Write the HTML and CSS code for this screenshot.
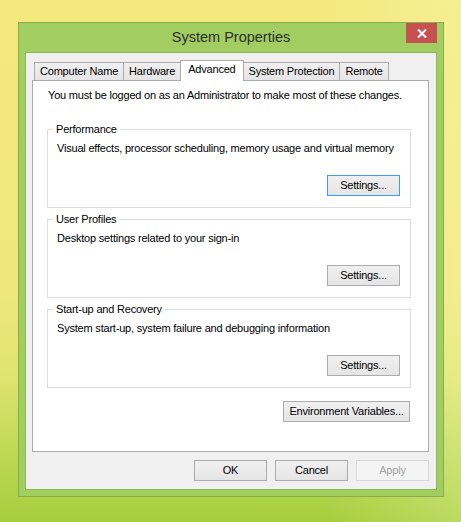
FILE: index.html
```html
<!DOCTYPE html>
<html lang="en">
<head>
<meta charset="utf-8">
<title>System Properties</title>
<link rel="stylesheet" href="styles.css">
</head>
<body>
<div class="window">
  <div class="titlebar">
    <span class="spacer"></span>
    <h1 class="title">System Properties</h1>
    <button class="close" aria-label="Close">
      <svg width="10" height="9" viewBox="0 0 10 9"><path d="M1 0.5 L9 8.5 M9 0.5 L1 8.5" stroke="#fff" stroke-width="2" fill="none"/></svg>
    </button>
  </div>
  <div class="client">
    <div class="tabs">
      <div class="tab">Computer Name</div>
      <div class="tab">Hardware</div>
      <div class="tab active">Advanced</div>
      <div class="tab">System Protection</div>
      <div class="tab">Remote</div>
    </div>
    <div class="panel">
      <p class="note">You must be logged on as an Administrator to make most of these changes.</p>
      <fieldset class="group">
        <legend>Performance</legend>
        <p class="desc">Visual effects, processor scheduling, memory usage and virtual memory</p>
        <div class="actions"><button class="btn focused">Settings...</button></div>
      </fieldset>
      <fieldset class="group">
        <legend>User Profiles</legend>
        <p class="desc">Desktop settings related to your sign-in</p>
        <div class="actions"><button class="btn">Settings...</button></div>
      </fieldset>
      <fieldset class="group">
        <legend>Start-up and Recovery</legend>
        <p class="desc">System start-up, system failure and debugging information</p>
        <div class="actions"><button class="btn">Settings...</button></div>
      </fieldset>
      <div class="env-row"><button class="btn env">Environment Variables...</button></div>
    </div>
    <div class="dialog-buttons">
      <button class="btn dlg">OK</button>
      <button class="btn dlg">Cancel</button>
      <button class="btn dlg disabled" disabled>Apply</button>
    </div>
  </div>
</div>
</body>
</html>
```

FILE: styles.css
```css
* { box-sizing: border-box; }
html, body {
  margin: 0;
  width: 461px;
  height: 522px;
  overflow: hidden;
}
body {
  background:
    linear-gradient(to right, rgba(255,255,255,0) 0%, rgba(255,255,255,0) 70%, rgba(255,255,210,0.25) 100%),
    linear-gradient(to bottom, #f3e97f 0%, #f0e77c 55%, #dfe46f 72%, #bcd853 88%, #a5ce3d 100%);
  font-family: "Liberation Sans", Arial, sans-serif;
  font-size: 11px;
  letter-spacing: -0.2px;
  color: #000;
}
.window {
  margin: 22px 0 0 18px;
  width: 426px;
  height: 475px;
  border: 1px solid #86ad4b;
  background: #a2cd61;
  padding: 0 6px 6px 6px;
  display: flex;
  flex-direction: column;
}
.titlebar {
  height: 29px;
  display: grid;
  grid-template-columns: 1fr auto 1fr;
  align-items: center;
}
.title {
  margin: 0;
  font-weight: normal;
  font-size: 14.5px;
  letter-spacing: 0;
  color: #2e2e2e;
  line-height: 29px;
}
.close {
  justify-self: end;
  align-self: start;
  width: 31px;
  height: 20px;
  border: 0;
  padding: 0;
  background: #c75050;
  display: flex;
  align-items: center;
  justify-content: center;
}
.close svg { display: block; }
.client {
  flex: 1;
  border: 1px solid #8fb655;
  background: #f0f0f0;
  padding: 7px 7px 8px 6px;
  display: flex;
  flex-direction: column;
}
.tabs {
  display: flex;
  height: 21px;
  margin-left: 2px;
  margin-bottom: -1px;
  position: relative;
  z-index: 1;
}
.tab {
  height: 18px;
  margin-top: 2px;
  margin-left: -1px;
  padding: 0 5px;
  border: 1px solid #acacac;
  border-bottom: 0;
  background: linear-gradient(#f0f0f0, #e5e5e5);
  line-height: 17px;
  white-space: nowrap;
}
.tab:first-child { margin-left: 0; }
.tab.active {
  height: 21px;
  margin-top: 0;
  padding: 0 7px;
  background: #fff;
  line-height: 17px;
}
.panel {
  height: 372px;
  background: #fff;
  border: 1px solid #acacac;
  display: flex;
  flex-direction: column;
}
.note {
  margin: 7px 0 0 15px;
  line-height: 15px;
}
.group {
  margin: 19px 17px 0 14px;
  padding: 4px 10px 11px 9px;
  border: 1px solid #dcdcdc;
  min-width: 0;
}
.group + .group { margin-top: 4px; }
.group legend {
  margin-left: -4px;
  padding: 0 3px;
  line-height: 15px;
}
.desc {
  margin: 0;
  line-height: 15px;
}
.actions {
  display: flex;
  justify-content: flex-end;
  margin-top: 19px;
}
.btn {
  font: inherit;
  letter-spacing: inherit;
  color: #000;
  height: 21px;
  width: 73px;
  padding: 0;
  border: 1px solid #acacac;
  background: linear-gradient(#f0f0f0, #e5e5e5);
  line-height: 19px;
}
.btn.focused { border-color: #3d9bf0; }
.env-row {
  display: flex;
  justify-content: flex-end;
  margin: 13px 18px 0 0;
}
.btn.env { width: 127px; }
.dialog-buttons {
  display: flex;
  justify-content: flex-end;
  gap: 8px;
  margin-top: 8px;
}
.btn.disabled {
  background: #f4f4f4;
  border-color: #d9d9d9;
  color: #a3a3a3;
}
```
